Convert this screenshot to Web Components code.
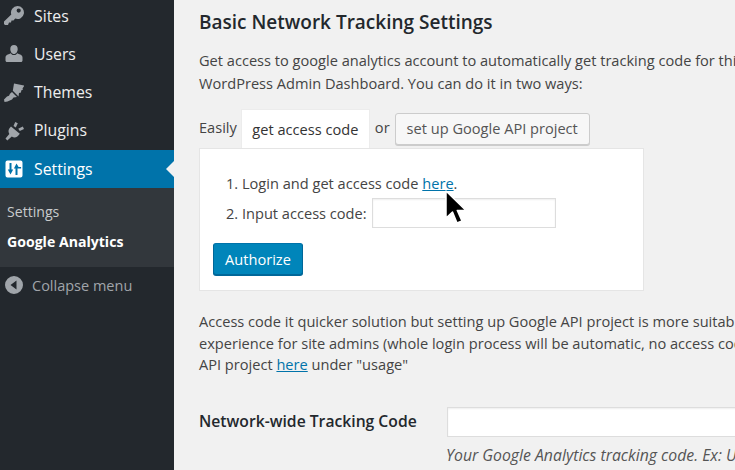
<!DOCTYPE html>
<html>
<head>
<meta charset="utf-8">
<style>
  html, body { margin: 0; height: 100%; }
  body { background: #f1f1f1; font: 14.6px/23px "Open Sans", sans-serif; color: #444; overflow: hidden; }
  a { color: #0073aa; text-decoration: underline; }
</style>
</head>
<body>
<wp-admin>
  <wp-sidebar slot="side">
    <wp-menu-item label="Sites">
      <svg slot="icon" viewBox="0 0 20 20"><path fill-rule="evenodd" d="M13.500 0a6.500 6.500 0 1 1-2.300 12.600L9.500 14.500 7.500 14.500 7 16.500 5 16.500 4 19H1L0 18v-2.500L7.300 8.500A6.500 6.500 0 0 1 13.500 0zM14.700 2.500a2.100 2.100 0 1 0 0 4.200 2.100 2.100 0 0 0 0-4.200z"/></svg>
    </wp-menu-item>
    <wp-menu-item label="Users">
      <svg slot="icon" viewBox="0 0 20 20"><path d="M10 1c2.300 0 3.700 1.700 3.700 3.900S12.400 10 10 10 6.300 7.100 6.300 4.900 7.700 1 10 1zM6.800 9.200C7.500 10.400 8.600 11.100 10 11.100s2.500-.7 3.200-1.900c1 .5 2 .8 3 1.200 1.400.6 2.300 1.500 2.300 3.100v3c0 .9-.7 1.500-1.500 1.500H3c-.8 0-1.500-.6-1.500-1.500v-3c0-1.600.9-2.500 2.300-3.100 1-.4 2-.7 3-1.200z"/></svg>
    </wp-menu-item>
    <wp-menu-item label="Themes">
      <svg slot="icon" viewBox="0 0 20 20"><path d="M10 1.500L20.500 3.500 18.500 6.500 19 7.500 17.200 8.500 17 10.500 15 11 14.500 14.500 8.800 8.800zM8 10L13 15 9.500 15.500 8 17.500 3.500 19.500.5 20 0 17.500 3 14.500 5 13.800 6 11.800z"/></svg>
    </wp-menu-item>
    <wp-menu-item label="Plugins">
      <svg slot="icon" viewBox="0 0 20 20"><path d="M11.200 1L13.800 2.200 11.800 6.500 9.500 5zM14.200 7.800L18.800 5.500 20 8 15.800 10zM7 5.500L15.800 12.800C13.500 16.500 10.500 17.300 7.800 15.500L3.300 19.500 1.500 17.500 5.300 13C3.700 10.500 4.500 7.500 7 5.500z"/></svg>
    </wp-menu-item>
    <wp-menu-item label="Settings" current>
      <svg slot="icon" viewBox="0 0 20 20"><path fill-rule="evenodd" d="M3.500 1.500h13a2 2 0 0 1 2 2v13a2 2 0 0 1-2 2h-13a2 2 0 0 1-2-2v-13a2 2 0 0 1 2-2zM5.500 4v6.500H3.800L6.500 15.500 9.200 10.500H7.500V4zM12.500 4.500L9.900 9.500h1.600V16h2V9.500h3.600v-1.500h-2.500z"/></svg>
    </wp-menu-item>
    <wp-submenu>
      <span>Settings</span>
      <b>Google Analytics</b>
    </wp-submenu>
    <wp-collapse>Collapse menu</wp-collapse>
  </wp-sidebar>

  <wp-settings slot="main">
    <h2>Basic Network Tracking Settings</h2>
    <p class="intro">Get access to google analytics account to automatically get tracking code for this<br>WordPress Admin Dashboard. You can do it in two ways:</p>
    <wp-tabs>
      <span>Easily</span>
      <wp-tab>get access code</wp-tab>
      <span class="or">or</span>
      <wp-button>set up Google API project</wp-button>
    </wp-tabs>
    <wp-panel>
      <div class="step"><span>1. Login and get access code <a>here</a>.</span></div>
      <div class="step"><span>2. Input access code:</span> <wp-input style="width:184px"></wp-input></div>
      <wp-button primary>Authorize</wp-button>
    </wp-panel>
    <p class="after">Access code it quicker solution but setting up Google API project is more suitable<br>experience for site admins (whole login process will be automatic, no access code<br>API project <a>here</a> under "usage"</p>
    <wp-field label="Network-wide Tracking Code">
      <wp-input style="width:400px"></wp-input>
      <em slot="hint">Your Google Analytics tracking code. Ex: UA-12345678-1</em>
    </wp-field>
  </wp-settings>
  <svg slot="overlay" viewBox="0 0 24 36" width="24" height="36"><path d="M2 1v27l6.500-6 4.500 11 5-2-4.700-10.500H22z" fill="#000" stroke="#fff" stroke-width="1.500" stroke-linejoin="round"/></svg>
</wp-admin>

<script>
function define (name, css, html) {
  const tpl = document.createElement('template')
  tpl.innerHTML = `<style>${css}</style>${html}`
  customElements.define(name, class extends HTMLElement {
    constructor () {
      super()
      this.attachShadow({mode: 'open'})
      this.shadowRoot.appendChild(tpl.content.cloneNode(true))
      const label = this.shadowRoot.querySelector('.label')
      if (label) label.textContent = this.getAttribute('label')
    }
  })
}

define('wp-admin', `
  :host { display: flex; position: relative; height: 470px; width: 735px; overflow: hidden; }
  ::slotted([slot="overlay"]) { position: absolute; left: 444px; top: 190px; }
`, `<slot name="side"></slot><slot name="main"></slot><slot name="overlay"></slot>`)

define('wp-sidebar', `
  :host { display: flex; flex-direction: column; flex: none; box-sizing: border-box; width: 174px; margin-top: -3px; height: 473px; background: #23282d; }
`, `<slot></slot>`)

define('wp-menu-item', `
  :host { display: flex; align-items: center; flex: none; height: 38.2px; gap: 10px; padding-left: 4px; position: relative; color: #eee; font-size: 15.800px; }
  :host([current]) { background: #0073aa; color: #fff; }
  :host([current])::after { content: ""; position: absolute; right: 0; top: 50%; margin-top: -8px; border: 8px solid transparent; border-right-color: #f1f1f1; border-left-width: 0; }
  .label { margin-top: .6px; }
  ::slotted(svg) { width: 20px; height: 20px; fill: #a0a5aa; flex: none; }
  :host([current]) ::slotted(svg) { fill: #fff; }
`, `<slot name="icon"></slot><span class="label"></span>`)

define('wp-submenu', `
  :host { display: flex; flex-direction: column; flex: none; box-sizing: border-box; height: 79px; padding: 12px 0 0 7px; gap: 7px; background: #32373c; color: #c9cbcd; font-size: 14.100px; }
  ::slotted(b) { color: #fff; font-weight: 700; }
`, `<slot></slot>`)

define('wp-collapse', `
  :host { display: flex; align-items: center; flex: none; height: 37px; gap: 9px; padding-left: 5px; color: #a0a5aa; font-size: 14.500px; }
  svg { width: 18px; height: 18px; fill: #a0a5aa; }
`, `<svg viewBox="0 0 18 18"><path fill-rule="evenodd" d="M9 0a9 9 0 1 1 0 18A9 9 0 0 1 9 0zM11.500 4.500L5.500 9l6 4.500z"/></svg><slot></slot>`)

define('wp-settings', `
  :host { display: block; flex: none; width: 600px; padding: 9px 0 0 25px; white-space: nowrap; }
  ::slotted(h2) { margin: 0; font: 600 19px/26px "Open Sans", sans-serif; color: #23282d; }
  ::slotted(p) { margin: 0; line-height: 23px; }
  ::slotted(p.intro) { margin-top: 14px; }
  ::slotted(p.after) { margin-top: 20px; line-height: 21.500px; }
`, `<slot></slot>`)

define('wp-tabs', `
  :host { display: flex; align-items: center; height: 39px; gap: 4px; margin-top: 14px; }
  ::slotted(span) { padding-bottom: 2px; }
  ::slotted(.or) { margin-left: 1px; }
  ::slotted(wp-button) { margin-left: 1px; }
`, `<slot></slot>`)

define('wp-tab', `
  :host { display: block; box-sizing: border-box; height: 39px; width: 129px; padding-top: 8px; text-align: center; background: #fff; color: #333; border: 1px solid #ececec; border-bottom: 0; }
`, `<slot></slot>`)

define('wp-button', `
  :host { display: inline-flex; align-items: center; justify-content: center; box-sizing: border-box; height: 32px; padding: 0 11px; background: #f7f7f7; color: #555; border: 1px solid #ccc; border-radius: 3px; box-shadow: 0 1px 0 #ccc; }
  :host([primary]) { background: #0085ba; border-color: #0073aa #006799 #006799; color: #fff; box-shadow: 0 1px 0 #006799; }
`, `<slot></slot>`)

define('wp-panel', `
  :host { display: block; box-sizing: border-box; width: 445px; height: 143px; padding: 19px 0 0 13px; background: #fff; border: 1px solid #e5e5e5; }
  ::slotted(.step) { display: flex; align-items: center; gap: 5px; margin-left: 13px; height: 30px; }
  ::slotted(wp-button) { margin-top: 15px; width: 90px; }
`, `<slot></slot>`)

define('wp-input', `
  :host { display: block; box-sizing: border-box; height: 30px; flex: none; background: #fff; border: 1px solid #ddd; box-shadow: inset 0 1px 2px rgba(0,0,0,.07); }
`, ``)

define('wp-field', `
  :host { display: grid; grid-template-columns: 248px auto; align-items: center; margin-top: 31px; }
  .label { font-weight: 600; font-size: 15.700px; color: #23282d; }
  ::slotted([slot="hint"]) { display: block; margin: 7px 0 0 -1px; color: #555; font-size: 15.800px; }
  .hint { grid-column: 2; }
`, `<span class="label"></span><slot></slot><div class="hint"><slot name="hint"></slot></div>`)
</script>
</body>
</html>
